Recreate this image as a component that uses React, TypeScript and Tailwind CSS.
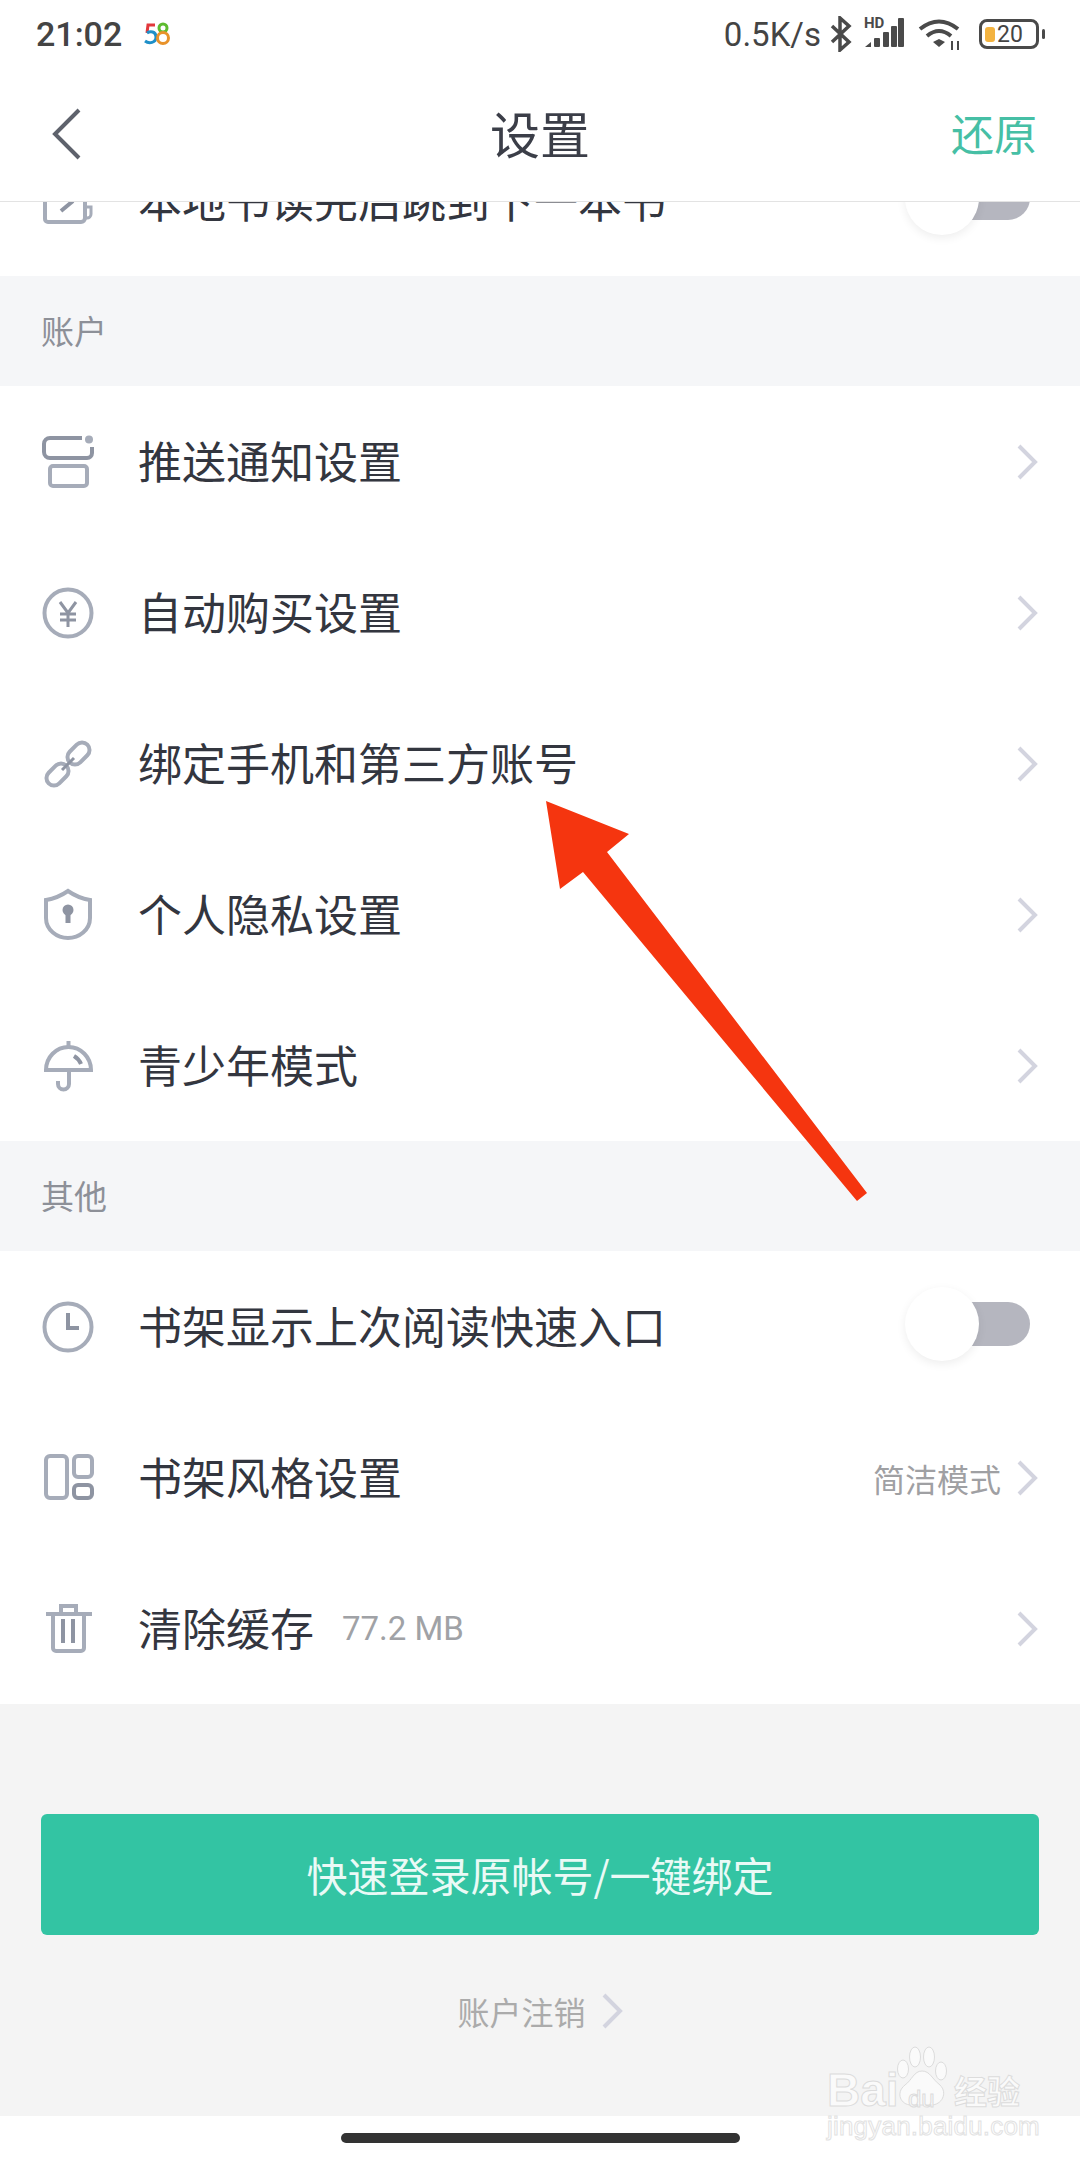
import type { ReactNode } from "react";

const stroke = "#a6acb9";
const dark = "#8e94a2";

function Icon({ children }: { children: ReactNode }) {
  return (
    <svg width="54" height="54" viewBox="0 0 54 54" fill="none" stroke={stroke} strokeWidth="4" className="shrink-0">
      {children}
    </svg>
  );
}

const PushIcon = (
  <Icon>
    <path d="M41 3H9a6 6 0 0 0-6 6v8a6 6 0 0 0 6 6h37a5 5 0 0 0 5-5v-6" stroke={dark} />
    <circle cx="48" cy="4.5" r="4" fill={stroke} stroke="none" />
    <rect x="9" y="31" width="37" height="20" rx="3" />
  </Icon>
);

const YenIcon = (
  <Icon>
    <circle cx="27" cy="27" r="23.5" />
    <path d="M19 16l8 11 8-11M19 28h16M19 34h16M27 27v14" stroke={dark} strokeWidth="3" />
  </Icon>
);

const LinkIcon = (
  <Icon>
    <rect x="25" y="9" width="25" height="15" rx="7.5" transform="rotate(-45 37.5 16.5)" />
    <rect x="4" y="30" width="25" height="15" rx="7.5" transform="rotate(-45 16.5 37.5)" />
    <path d="M21 33l12-12" stroke={dark} strokeWidth="3" />
  </Icon>
);

const ShieldIcon = (
  <Icon>
    <path d="M27 3q10 7 22 9v18c0 12-11 20-22 20S5 42 5 30V12q12-2 22-9z" />
    <circle cx="27" cy="22" r="5.5" fill={dark} stroke="none" />
    <rect x="24.5" y="22" width="5" height="13" fill={dark} stroke="none" />
  </Icon>
);

const UmbrellaIcon = (
  <Icon>
    <path d="M5 31a22.500 23 0 0 1 45 0z" />
    <path d="M27.500 2v6" />
    <path d="M28 31v14a5.500 5.500 0 0 1-11 0v-3" />
    <path d="M33 17q5 3 7 8" stroke={dark} />
  </Icon>
);

const ClockIcon = (
  <Icon>
    <circle cx="27" cy="27" r="23.500" />
    <path d="M27 13v15h11" stroke={dark} />
  </Icon>
);

const ShelfIcon = (
  <Icon>
    <rect x="5" y="5" width="21" height="42" rx="4" />
    <rect x="33" y="5" width="18" height="21" rx="4" />
    <rect x="33" y="34" width="18" height="13" rx="4" stroke={dark} />
  </Icon>
);

const TrashIcon = (
  <Icon>
    <path d="M5 12h46M20 11V4h15v7" />
    <path d="M12 12v34a3 3 0 0 0 3 3h25a3 3 0 0 0 3-3V12" />
    <path d="M22 17v24M32 17v24" stroke={dark} />
  </Icon>
);

const MugIcon = (
  <Icon>
    <path d="M4 20v25a3 3 0 0 0 3 3h33a4 4 0 0 0 4-4V28" />
    <path d="M44 33h6v7a4 4 0 0 1-4 4h-2" strokeWidth="3" />
    <path d="M20 37l12-10" stroke={dark} />
  </Icon>
);

function Chevron({ className = "" }: { className?: string }) {
  return (
    <svg width="21" height="36" viewBox="0 0 21 36" fill="none" stroke="#d3d4df" strokeWidth="4" className={`shrink-0 ${className}`}>
      <path d="M2 2l16 16L2 34" />
    </svg>
  );
}

function Toggle() {
  return (
    <div className="relative w-[125px] h-[74px] mr-[8px] -translate-y-[3px] flex items-center justify-end shrink-0">
      <div className="w-[100px] h-[44px] rounded-full bg-[#b5b6bf]" />
      <div className="absolute left-0 top-0 w-[74px] h-[74px] rounded-full bg-white shadow-[0_3px_10px_rgba(0,0,0,0.07)]" />
    </div>
  );
}

function Row({ icon, title, note, right }: { icon: ReactNode; title: string; note?: string; right?: ReactNode }) {
  return (
    <div className="h-[151px] shrink-0 bg-white flex items-center pl-[41px] pr-[42px]">
      {icon}
      <span className="ml-[43px] pb-[3px] text-[44px] text-[#33363f] leading-none">{title}</span>
      {note && <span className="ml-[28px] text-[33px] text-[#a0a2a6] leading-none [font-family:Roboto,sans-serif]">{note}</span>}
      <div className="ml-auto flex items-center">{right ?? <Chevron />}</div>
    </div>
  );
}

function SectionLabel({ text }: { text: string }) {
  return (
    <div className="h-[110px] shrink-0 bg-[#f5f6f8] flex items-center pl-[41px] text-[33px] text-[#8d9098]">{text}</div>
  );
}

function StatusBar() {
  return (
    <div className="h-[68px] flex items-center justify-between pl-[36px] pr-[35px] text-[#444444]">
      <div className="flex items-center">
        <span className="text-[34px] font-medium leading-none [font-family:Roboto,sans-serif]">21:02</span>
        <svg width="28" height="24" viewBox="0 0 28 24" fill="none" strokeWidth="3" className="ml-[21px]">
          <path d="M12 3H5L4 11" stroke="#e2383c" />
          <path d="M4 11c3-2 9-2 9 4s-7 7-11 4" stroke="#1e8fc8" />
          <circle cx="20" cy="6" r="4" stroke="#5dbb2f" />
          <circle cx="20" cy="16" r="5.500" stroke="#e8922a" />
        </svg>
      </div>
      <div className="flex items-center">
        <span className="text-[33px] leading-none [font-family:Roboto,sans-serif]">0.5K/s</span>
        <svg width="22" height="36" viewBox="0 0 22 36" fill="none" stroke="#4a4a4a" strokeWidth="3.5" className="ml-[9px]">
          <path d="M2 10l17 16-9 8V2l9 8L2 26" />
        </svg>
        <svg width="40" height="34" viewBox="0 0 40 34" fill="#4a4a4a" className="ml-[12px] -translate-y-[3px]">
          <text x="0" y="14" fontSize="15" fontWeight="700" fontFamily="Roboto, sans-serif">HD</text>
          <path d="M1 33l6-5v5z" />
          <rect x="10" y="24" width="6" height="9" rx="1" />
          <rect x="19" y="18" width="6" height="15" rx="1" />
          <rect x="27" y="12" width="6" height="21" rx="1" />
          <rect x="34" y="4" width="6" height="29" rx="1" />
        </svg>
        <svg width="44" height="34" viewBox="0 0 44 34" fill="none" stroke="#4a4a4a" strokeWidth="4" className="ml-[14px]">
          <path d="M2 12q19-15 38 0" />
          <path d="M9 19q12-10 24 0" />
          <path d="M15 25l6-3 6 3-6 5z" fill="#4a4a4a" stroke="none" />
          <path d="M34 24v9M40 24v9" strokeWidth="2" />
        </svg>
        <div className="ml-[17px] w-[60px] h-[30px] rounded-[8px] border-[3.5px] border-[#4a4a4a] flex items-center pl-[3px]">
          <div className="w-[10px] h-[15px] rounded-[3px] bg-[#f3b340]" />
          <span className="ml-[2px] text-[23px] leading-none [font-family:Roboto,sans-serif]">20</span>
        </div>
        <div className="ml-[3px] w-[3px] h-[10px] rounded-full bg-[#4a4a4a]" />
      </div>
    </div>
  );
}

function Header() {
  return (
    <div className="h-[134px] grid grid-cols-3 items-center px-[43px] border-b border-[#e3e3e3] pb-[5px]">
      <svg width="30" height="52" viewBox="0 0 30 52" fill="none" stroke="#5e626c" strokeWidth="4" className="ml-[8px] translate-y-[2px]">
        <path d="M28 2L4 26l24 24" />
      </svg>
      <span className="text-[50px] text-[#3b3e48] text-center leading-none">设置</span>
      <span className="text-[43px] text-[#46bfa5] text-right leading-none">还原</span>
    </div>
  );
}

function Watermark() {
  const outline = "text-[#fafafa] [-webkit-text-stroke:1px_#dcdcdc] leading-none";
  return (
    <div className="absolute left-[827px] top-[2045px] w-[194px] h-[92px]">
      <span className={`absolute left-0 top-[22px] text-[46px] font-bold [font-family:'Liberation_Sans',sans-serif] ${outline}`}>Bai</span>
      <svg width="58" height="62" viewBox="0 0 58 62" className="absolute left-[68px] top-0" fill="#fafafa" stroke="#dcdcdc" strokeWidth="1">
        <ellipse cx="20" cy="12" rx="5.500" ry="10" />
        <ellipse cx="34" cy="12" rx="5.500" ry="10" />
        <ellipse cx="8" cy="24" rx="5.500" ry="9" />
        <ellipse cx="46" cy="26" rx="5.500" ry="9" />
        <path d="M27 26c8 0 10 8 18 14 8 8 2 20-9 20H16C6 60 0 48 10 40c7-5 9-14 17-14z" />
      </svg>
      <span className={`absolute left-[81px] top-[42px] text-[24px] [font-family:'Liberation_Sans',sans-serif] ${outline}`}>du</span>
      <span className={`absolute left-[127px] top-[29px] text-[33px] font-bold ${outline}`}>经验</span>
      <span className="absolute left-0 top-[68px] text-[26px] leading-none text-white [-webkit-text-stroke:1px_#e2e2e2] [font-family:'Liberation_Sans',sans-serif] tracking-[0.2px]">jingyan.baidu.com</span>
    </div>
  );
}

export default function App() {
  return (
    <div className="relative w-[1080px] h-[2160px] overflow-hidden bg-white flex flex-col [font-family:'Noto_Sans_CJK_SC','Noto_Sans',sans-serif]">
      <StatusBar />
      <Header />

      {/* list is scrolled, only the lower half of this row shows */}
      <div className="h-[74px] shrink-0 overflow-hidden flex flex-col justify-end">
        <Row icon={MugIcon} title="本地书读完后跳到下一本书" right={<Toggle />} />
      </div>

      <SectionLabel text="账户" />
      <Row icon={PushIcon} title="推送通知设置" />
      <Row icon={YenIcon} title="自动购买设置" />
      <Row icon={LinkIcon} title="绑定手机和第三方账号" />
      <Row icon={ShieldIcon} title="个人隐私设置" />
      <Row icon={UmbrellaIcon} title="青少年模式" />

      <SectionLabel text="其他" />
      <Row icon={ClockIcon} title="书架显示上次阅读快速入口" right={<Toggle />} />
      <Row
        icon={ShelfIcon}
        title="书架风格设置"
        right={
          <>
            <span className="text-[32px] text-[#9fa0a3] leading-none mr-[16px]">简洁模式</span>
            <Chevron />
          </>
        }
      />
      <Row icon={TrashIcon} title="清除缓存" note="77.2 MB" />

      <div className="flex-1 bg-[#f4f4f4] flex flex-col items-center pt-[110px] px-[41px]">
        <button className="w-full h-[121px] rounded-[6px] bg-[#33c4a3] text-[41px] text-[#eafaf6]">
          快速登录原帐号/一键绑定
        </button>
        <div className="mt-[58px] flex items-center">
          <span className="text-[32px] text-[#ababab] leading-none">账户注销</span>
          <Chevron className="ml-[16px]" />
        </div>
      </div>

      <div className="h-[44px] shrink-0 bg-white flex justify-center pt-[17px]">
        <div className="w-[399px] h-[10px] rounded-full bg-[#333333]" />
      </div>

      <Watermark />

      {/* red annotation arrow drawn on top of the screenshot */}
      <svg width="1080" height="2160" viewBox="0 0 1080 2160" className="absolute left-0 top-0 pointer-events-none">
        <polygon points="546,801 629,834 607,852 867,1193 857,1201 583,872 560,889" fill="#f5350f" />
      </svg>
    </div>
  );
}
